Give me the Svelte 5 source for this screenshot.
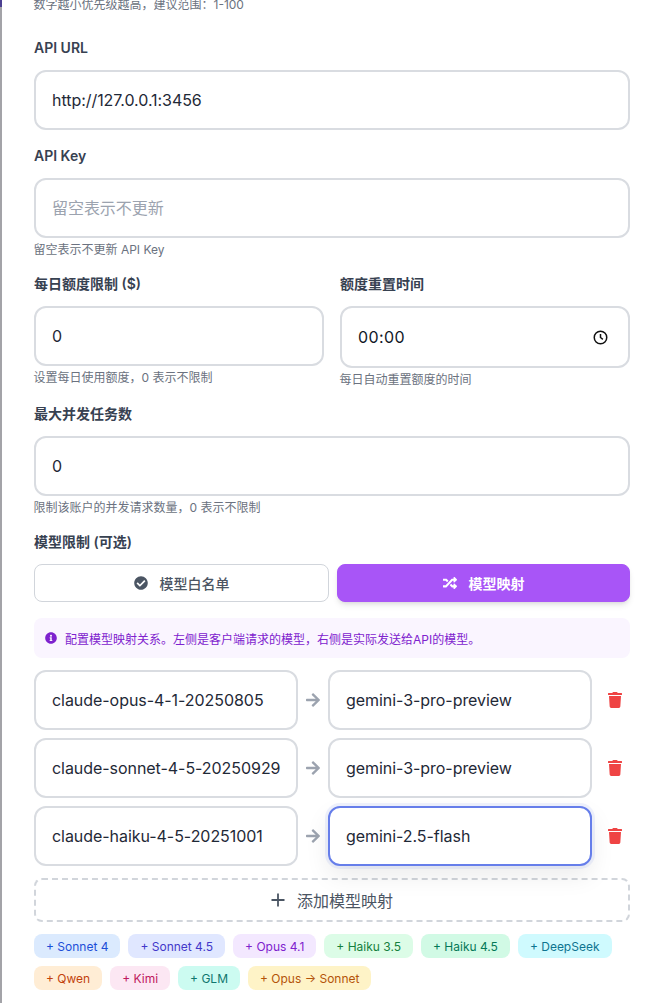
<script>
	const mappings = [
		{ from: 'claude-opus-4-1-20250805', to: 'gemini-3-pro-preview' },
		{ from: 'claude-sonnet-4-5-20250929', to: 'gemini-3-pro-preview' },
		{ from: 'claude-haiku-4-5-20251001', to: 'gemini-2.5-flash', focus: true }
	];

	const presets = [
		{ label: '+ Sonnet 4', tone: 'blue' },
		{ label: '+ Sonnet 4.5', tone: 'indigo' },
		{ label: '+ Opus 4.1', tone: 'purple' },
		{ label: '+ Haiku 3.5', tone: 'green' },
		{ label: '+ Haiku 4.5', tone: 'emerald' },
		{ label: '+ DeepSeek', tone: 'cyan' },
		{ label: '+ Qwen', tone: 'orange' },
		{ label: '+ Kimi', tone: 'pink' },
		{ label: '+ GLM', tone: 'teal' },
		{ label: '+ Opus → Sonnet', tone: 'amber' }
	];
</script>

<div class="form">
	<p class="hint first">数字越小优先级越高&#65292;建议范围&#65306;1-100</p>

	<div class="group">
		<label for="url">API URL</label>
		<input id="url" class="field" value="http://127.0.0.1:3456" />
	</div>

	<div class="group">
		<label for="key">API Key</label>
		<input id="key" class="field" placeholder="留空表示不更新" />
		<p class="hint">留空表示不更新 API Key</p>
	</div>

	<div class="columns">
		<div>
			<label for="quota">每日额度限制 ($)</label>
			<input id="quota" class="field" value="0" />
			<p class="hint">设置每日使用额度&#65292;0 表示不限制</p>
		</div>
		<div>
			<label for="reset">额度重置时间</label>
			<div class="field time">
				<input id="reset" value="00:00" />
				<svg viewBox="0 0 24 24" width="15" height="15" fill="none" stroke="#111" stroke-width="2.4">
					<circle cx="12" cy="12" r="10" />
					<path d="M12 6.5V12l3.8 3" />
				</svg>
			</div>
			<p class="hint">每日自动重置额度的时间</p>
		</div>
	</div>

	<div class="group">
		<label for="tasks">最大并发任务数</label>
		<input id="tasks" class="field" value="0" />
		<p class="hint">限制该账户的并发请求数量&#65292;0 表示不限制</p>
	</div>

	<div class="group">
		<span class="label">模型限制 (可选)</span>
		<div class="modes">
			<button class="mode">
				<svg viewBox="0 0 512 512" width="14" height="14" fill="currentColor"><path d="M504 256c0 136.967-111.033 248-248 248S8 392.967 8 256 119.033 8 256 8s248 111.033 248 248zM227.314 387.314l184-184c6.248-6.248 6.248-16.379 0-22.627l-22.627-22.627c-6.248-6.249-16.379-6.249-22.628 0L216 308.118l-70.059-70.059c-6.248-6.248-16.379-6.248-22.628 0l-22.627 22.627c-6.248 6.248-6.248 16.379 0 22.627l104 104c6.249 6.249 16.379 6.249 22.628.001z" /></svg>
				模型白名单
			</button>
			<button class="mode active">
				<svg viewBox="0 0 512 512" width="14" height="14" fill="currentColor"><path d="M504.971 359.029c9.373 9.373 9.373 24.569 0 33.941l-80 79.984c-15.01 15.01-40.971 4.49-40.971-16.971V416h-58.785a12.004 12.004 0 0 1-8.773-3.812l-70.556-75.596 53.333-57.143L352 336h32v-39.981c0-21.438 25.943-31.998 40.971-16.971l80 79.981zM12 176h84l52.781 56.551 53.333-57.143-70.556-75.596A11.999 11.999 0 0 0 122.785 96H12c-6.627 0-12 5.373-12 12v56c0 6.627 5.373 12 12 12zm372 0v39.984c0 21.46 25.961 31.98 40.971 16.971l80-79.984c9.373-9.373 9.373-24.569 0-33.941l-80-79.981C409.943 24.021 384 34.582 384 56.019V96h-58.785a12.004 12.004 0 0 0-8.773 3.812L96 336H12c-6.627 0-12 5.373-12 12v56c0 6.627 5.373 12 12 12h110.785c3.326 0 6.503-1.381 8.773-3.812L352 176h32z" /></svg>
				模型映射
			</button>
		</div>

		<div class="notice">
			<svg viewBox="0 0 512 512" width="12" height="12" fill="currentColor"><path d="M256 8C119.043 8 8 119.083 8 256c0 136.997 111.043 248 248 248s248-111.003 248-248C504 119.083 392.957 8 256 8zm0 110c23.196 0 42 18.804 42 42s-18.804 42-42 42-42-18.804-42-42 18.804-42 42-42zm56 254c0 6.627-5.373 12-12 12h-88c-6.627 0-12-5.373-12-12v-24c0-6.627 5.373-12 12-12h12v-64h-12c-6.627 0-12-5.373-12-12v-24c0-6.627 5.373-12 12-12h64c6.627 0 12 5.373 12 12v100h12c6.627 0 12 5.373 12 12v24z" /></svg>
			<span>配置模型映射关系。左侧是客户端请求的模型&#65292;右侧是实际发送给API的模型。</span>
		</div>

		<div class="rows">
			{#each mappings as m}
				<div class="row">
					<input class="field" value={m.from} />
					<svg class="arrow" viewBox="0 0 448 512" width="14" height="16" fill="currentColor"><path d="M190.5 66.9l22.2-22.2c9.4-9.4 24.6-9.4 33.9 0L441 239c9.4 9.4 9.4 24.6 0 33.9L246.6 467.3c-9.4 9.4-24.6 9.4-33.9 0l-22.2-22.2c-9.5-9.5-9.3-25 .4-34.3L311.4 296H24c-13.3 0-24-10.7-24-24v-32c0-13.3 10.7-24 24-24h287.4L190.9 101.2c-9.8-9.3-10-24.8-.4-34.3z" /></svg>
					<input class="field" class:focus={m.focus} value={m.to} />
					<button class="trash" aria-label="删除">
						<svg viewBox="0 0 448 512" width="14" height="16" fill="currentColor"><path d="M432 32H312l-9.4-18.7A24 24 0 0 0 281.1 0H166.8a23.72 23.72 0 0 0-21.4 13.3L136 32H16A16 16 0 0 0 0 48v32a16 16 0 0 0 16 16h416a16 16 0 0 0 16-16V48a16 16 0 0 0-16-16zM53.2 467a48 48 0 0 0 47.9 45h245.8a48 48 0 0 0 47.9-45L416 128H32z" /></svg>
					</button>
				</div>
			{/each}
		</div>

		<button class="add">
			<svg viewBox="0 0 14 14" width="14" height="14" fill="none" stroke="currentColor" stroke-width="1.8"><path d="M7 .5v13M.5 7h13" /></svg>
			添加模型映射
		</button>

		<div class="chips">
			{#each presets as p}
				<button class="chip {p.tone}">{p.label}</button>
			{/each}
		</div>
	</div>
</div>

<style>
	:global(body) {
		background: #fff;
		font-family: Inter, 'Noto Sans CJK SC', sans-serif;
	}

	.form {
		height: 1003px;
		box-sizing: border-box;
		overflow: hidden;
		padding: 0 28px 0 32px;
		border-left: 2px solid #a3a3a8;
		border-image: linear-gradient(#4c3f91 8px, #a3a3a8 8px) 1;
		color: #374151;
		font-size: 14px;
	}

	p {
		margin: 0;
	}

	.hint {
		margin-top: 4px;
		margin-left: -0.5px;
		font-size: 12px;
		line-height: 16px;
		color: #6b7280;
	}

	.hint.first {
		margin-top: -3px;
	}

	.group {
		margin-top: 16px;
	}

	.first + .group {
		margin-top: 25px;
	}

	label,
	.label {
		display: block;
		margin-bottom: 12px;
		font-size: 14px;
		line-height: 20px;
		font-weight: 600;
		color: #374151;
	}

	input {
		font: inherit;
		font-size: 16px;
		color: #111827;
	}

	.field {
		display: block;
		width: 100%;
		height: 60px;
		box-sizing: border-box;
		padding: 0 16px;
		background: #fff;
		border: 2px solid #d9dce1;
		border-radius: 12px;
		outline: none;
		font-size: 16px;
		letter-spacing: -0.05px;
		color: #1f2937;
	}

	.field::placeholder {
		color: #9ca3af;
	}

	.field.focus {
		border-color: #667eea;
		box-shadow:
			0 0 0 3px rgba(102, 126, 234, 0.1),
			0 10px 25px rgba(0, 0, 0, 0.08);
	}

	.columns {
		display: grid;
		grid-template-columns: minmax(0, 1fr) minmax(0, 1fr);
		gap: 16px;
		margin-top: 16px;
	}

	.time {
		display: flex;
		align-items: center;
		height: 62px;
		padding-right: 20px;
	}

	.time input {
		flex: 1;
		min-width: 0;
		border: 0;
		padding: 0;
		outline: none;
		letter-spacing: 0.4px;
	}

	.modes {
		display: flex;
		gap: 8px;
	}

	button {
		font: inherit;
		cursor: pointer;
	}

	.mode {
		flex: 1;
		display: flex;
		align-items: center;
		justify-content: center;
		gap: 12px;
		height: 38px;
		background: #fff;
		border: 1px solid #d1d5db;
		border-radius: 8px;
		color: #4b5563;
		font-size: 14px;
		font-weight: 500;
	}

	.mode:first-child {
		flex: 0 0 295px;
	}

	.mode.active {
		background: #a855f7;
		border-color: #a855f7;
		color: #fff;
		font-weight: 600;
		box-shadow: 0 4px 6px -1px rgba(0, 0, 0, 0.1), 0 2px 4px -2px rgba(0, 0, 0, 0.1);
	}

	.notice {
		display: flex;
		align-items: center;
		gap: 8px;
		height: 40px;
		box-sizing: border-box;
		margin-top: 16px;
		padding: 0 11px;
		background: #faf5ff;
		border-radius: 8px;
		color: #7e22ce;
		font-size: 12px;
	}

	.rows {
		display: flex;
		flex-direction: column;
		gap: 8px;
		margin-top: 12px;
	}

	.row {
		display: flex;
		align-items: center;
		gap: 8px;
	}

	.row .field {
		flex: 1;
		min-width: 0;
		width: auto;
		padding-right: 12px;
	}

	.arrow {
		flex: none;
		color: #9ca3af;
	}

	.trash {
		flex: none;
		width: 30px;
		height: 32px;
		padding: 0;
		display: flex;
		align-items: center;
		justify-content: center;
		background: none;
		border: 0;
		color: #ef4444;
	}

	.add {
		display: flex;
		align-items: center;
		justify-content: center;
		gap: 12px;
		width: 100%;
		height: 44px;
		margin-top: 12px;
		background: #fff;
		border: 2px dashed #d1d5db;
		border-radius: 8px;
		color: #4b5563;
		font-size: 16px;
	}

	.chips {
		display: flex;
		flex-wrap: wrap;
		gap: 8px;
		margin-top: 12px;
	}

	.chip {
		height: 24px;
		padding: 0 12px;
		border: 0;
		border-radius: 8px;
		font-size: 12px;
	}

	.blue { background: #dbeafe; color: #1d4ed8; }
	.indigo { background: #e0e7ff; color: #4338ca; }
	.purple { background: #f3e8ff; color: #7e22ce; }
	.green { background: #dcfce7; color: #15803d; }
	.emerald { background: #d1fae5; color: #047857; }
	.cyan { background: #cffafe; color: #0e7490; }
	.orange { background: #ffedd5; color: #c2410c; }
	.pink { background: #fce7f3; color: #be185d; }
	.teal { background: #ccfbf1; color: #0f766e; }
	.amber { background: #fef3c7; color: #b45309; }
</style>
